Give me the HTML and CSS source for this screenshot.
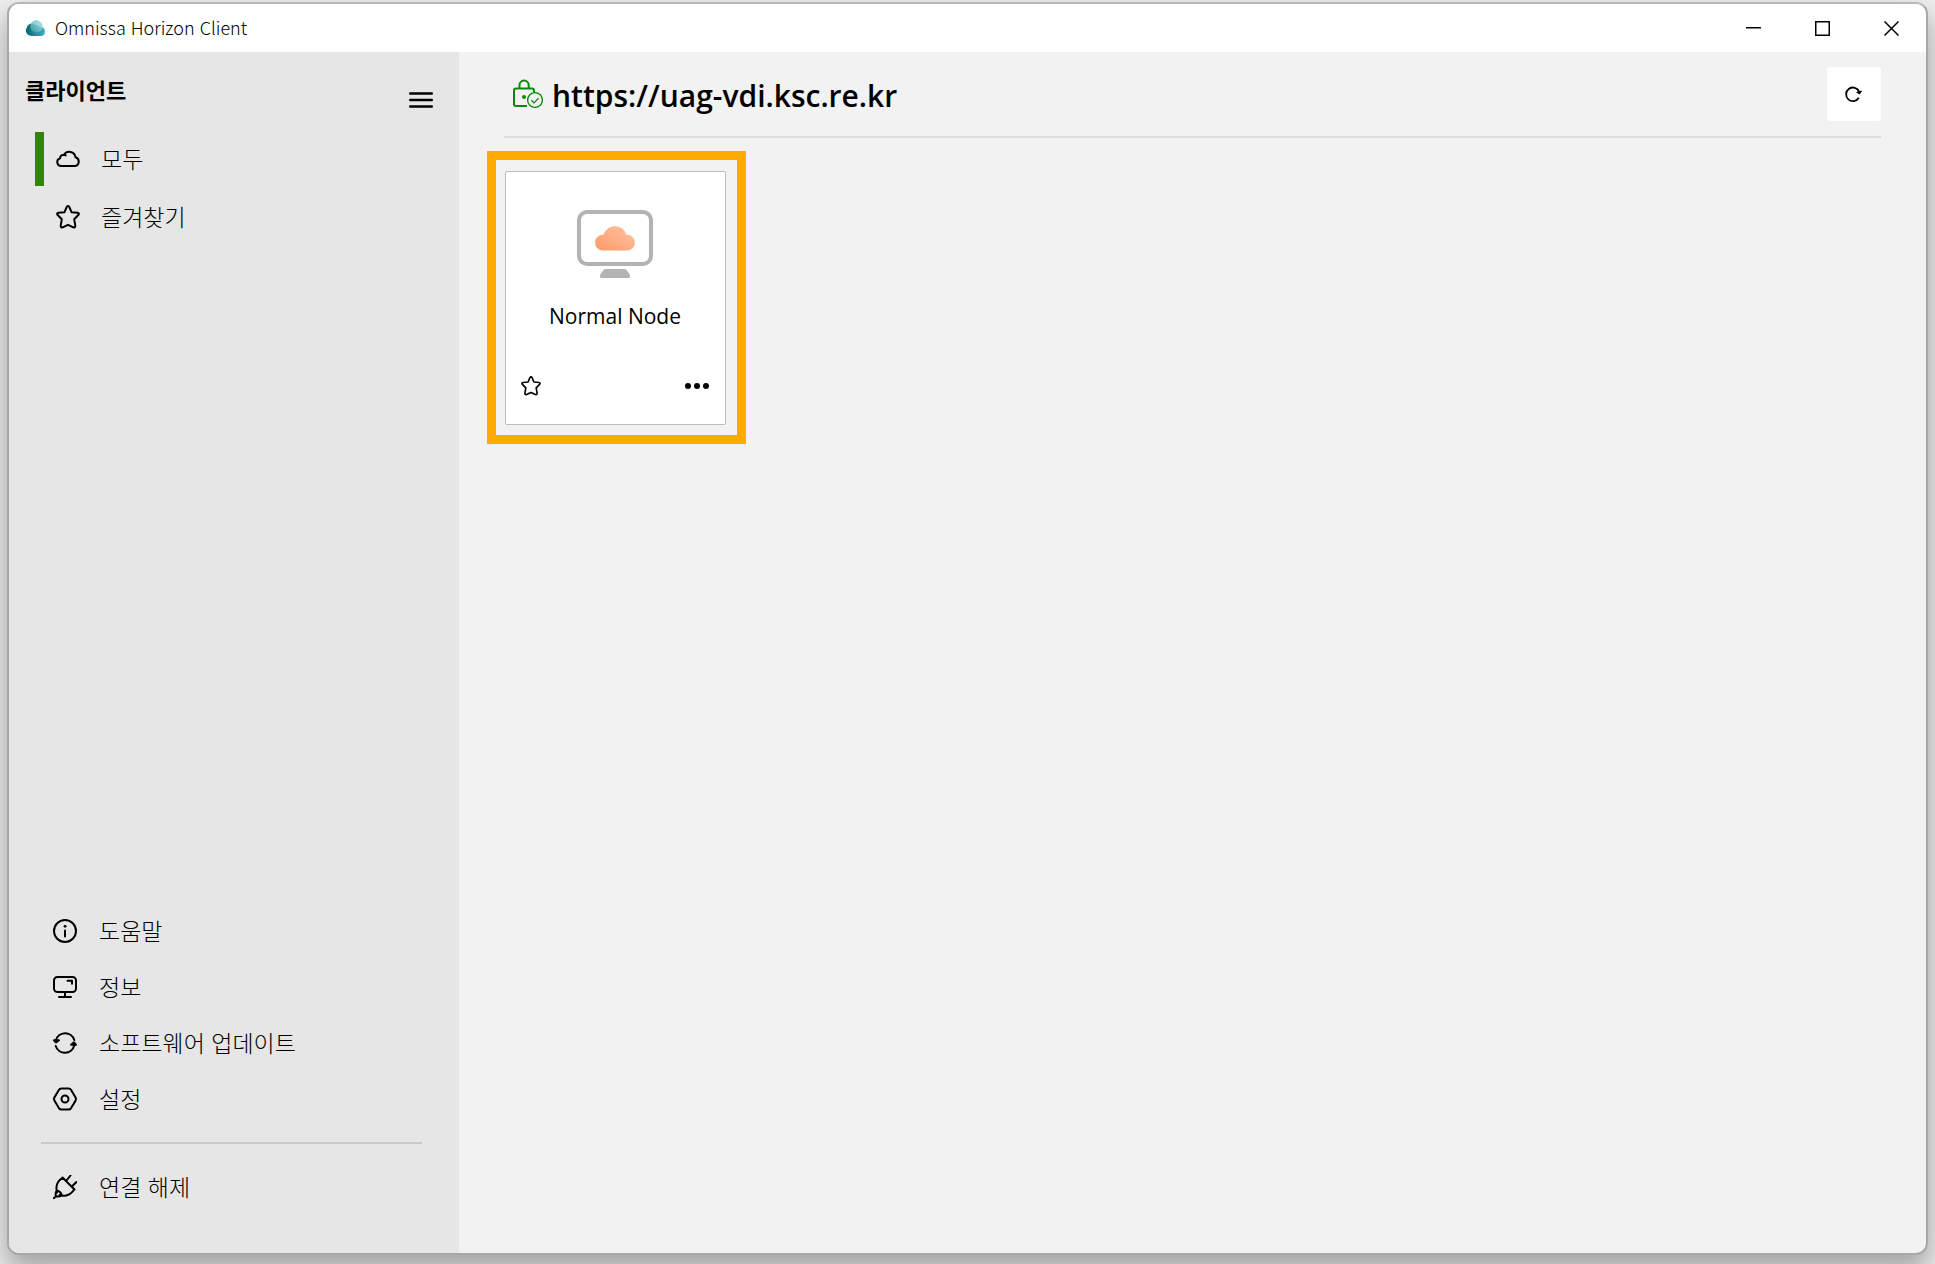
FILE: index.html
```html
<!DOCTYPE html>
<html lang="ko">
<head>
<meta charset="utf-8">
<meta name="viewport" content="width=device-width, initial-scale=1">
<title>Omnissa Horizon Client</title>
<link rel="stylesheet" href="styles.css">
</head>
<body>
<div class="window">
  <header class="titlebar">
    <svg class="app-logo" width="20" height="16" viewBox="0 0 20 16" aria-hidden="true">
      <defs>
        <linearGradient id="logo-base" x1="0" y1="0" x2="1" y2="0"><stop offset="0" stop-color="#0b6470"/><stop offset="1" stop-color="#3bb3c4"/></linearGradient>
        <linearGradient id="logo-top" x1="1" y1="0" x2="0" y2="1"><stop offset="0" stop-color="#b4e6ea"/><stop offset="1" stop-color="#3a9fab"/></linearGradient>
      </defs>
      <path d="M5.500 16A5.500 5.500 0 0 1 .8 7.500 5.500 5.500 0 0 1 5.500 3.500L15 7a4.600 4.600 0 0 1 .5 9z" fill="url(#logo-base)"/>
      <circle cx="10.500" cy="6.300" r="6.200" fill="url(#logo-top)" opacity=".85"/>
    </svg>
    <span class="app-title">Omnissa Horizon Client</span>
    <div class="window-controls">
      <button type="button" class="window-button" aria-label="최소화"><svg width="15" height="15" viewBox="0 0 15 15"><path d="M0 6.750h15" stroke="#000" stroke-width="1.500"/></svg></button>
      <button type="button" class="window-button" aria-label="최대화"><svg width="15" height="15" viewBox="0 0 15 15"><path d="M.75.75h13.500v13.500H.75z" fill="none" stroke="#000" stroke-width="1.500"/></svg></button>
      <button type="button" class="window-button" aria-label="닫기"><svg width="15" height="15" viewBox="0 0 15 15"><path d="M.5.5l14 14M14.500.5l-14 14" stroke="#000" stroke-width="1.500"/></svg></button>
    </div>
  </header>

  <div class="body">
    <aside class="sidebar">
      <div class="sidebar-head">
        <h2 class="sidebar-title">클라이언트</h2>
        <button type="button" class="menu-button" aria-label="메뉴"><svg width="24" height="18" viewBox="0 0 24 18"><path d="M1.200 2.500h21.600M1.200 9h21.600M1.200 15.500h21.600" stroke="#000" stroke-width="2.400" stroke-linecap="round"/></svg></button>
      </div>
      <nav class="nav">
        <a href="#all" class="nav-item nav-item-active">
          <svg class="icon" viewBox="0 0 24 24"><path d="M5.500 19h13a4.500 4.500 0 0 0 1-8.800 6.300 6.300 0 0 0-11.500-2.500 4 4 0 0 0-4 3.700A3.900 3.900 0 0 0 5.500 19zM8 7.700c.7.100 1.200.300 1.700.700"/></svg>
          <span class="item-label">모두</span>
        </a>
        <a href="#favorites" class="nav-item">
          <svg class="icon" viewBox="0 0 24 24"><path d="M10.700 2Q12 0 13.300 2L15.500 7.200 21.500 7.800Q23.800 8.300 22.300 10L18.200 14.300 19.300 20.500Q19.400 23 17.300 22.300L12 19.800 6.700 22.300Q4.600 23 4.700 20.500L5.800 14.300 1.700 10Q.2 8.300 2.500 7.800L8.500 7.200Z"/></svg>
          <span class="item-label">즐겨찾기</span>
        </a>
      </nav>
      <nav class="nav-bottom">
        <a href="#help" class="link-item">
          <svg class="icon" viewBox="0 0 24 24"><circle cx="12" cy="12" r="11"/><path d="M12 11.500v6"/><circle class="solid" cx="12" cy="7.300" r="1"/></svg>
          <span class="item-label">도움말</span>
        </a>
        <a href="#about" class="link-item">
          <svg class="icon" viewBox="0 0 24 24"><rect x="1" y="2" width="22" height="15" rx="3.500"/><path d="M12 17v4M6 22h12M14.500 5.800h4.500v3"/></svg>
          <span class="item-label">정보</span>
        </a>
        <a href="#update" class="link-item">
          <svg class="icon" viewBox="0 0 24 24"><path d="M2.800 9.500A9.600 9.600 0 0 1 21.300 9M21.200 14.500A9.600 9.600 0 0 1 2.700 15"/><path class="arrow" d="M1 9.300h5L3 11.500zM23 13.800h-5L21 11.300z"/></svg>
          <span class="item-label">소프트웨어 업데이트</span>
        </a>
        <a href="#settings" class="link-item">
          <svg class="icon" viewBox="0 0 24 24"><path d="M8.500 1.500h7q1.700 0 2.600 1.400l4.200 7q1.300 2.100 0 4.200l-4.200 7q-.9 1.400-2.600 1.400h-7q-1.700 0-2.600-1.400l-4.200-7q-1.300-2.100 0-4.200l4.200-7q.9-1.400 2.600-1.400z"/><circle cx="12" cy="12" r="3.500"/></svg>
          <span class="item-label">설정</span>
        </a>
        <hr class="nav-divider">
        <a href="#disconnect" class="link-item">
          <svg class="icon" viewBox="0 0 24 24"><path d="M9.500 2.500 21.500 14.500M9.500 2.800Q4 6 3.500 12 3.300 15 4 17.500M21.200 14.500Q18 19.500 13 20.500 9 21 6.500 20M13.500 5.500l4-5M18.800 11.500l4.700-4.500M.8 23.300 3 21.200M3.700 15.500Q2 18 3 21.200 6 22 8.800 20.300 8 16.500 3.700 15.500"/></svg>
          <span class="item-label">연결 해제</span>
        </a>
      </nav>
    </aside>

    <main class="main">
      <div class="server-bar">
        <svg class="lock" width="30" height="30" viewBox="0 0 30 30" fill="none" stroke="#088a08" aria-hidden="true">
          <path d="M14 27H3q-2 0-2-2V11.500q0-2 2-2h16q2 0 2 2V13" stroke-width="2"/>
          <path d="M6.500 9.500V6.200a4.600 4.600 0 0 1 9.200 0v3.300" stroke-width="2"/>
          <circle cx="11" cy="18" r="2" fill="#088a08" stroke="none"/>
          <circle cx="22" cy="21" r="7.400" stroke-width="1.300"/>
          <path d="M18.300 21.300l2.700 2.600 4.700-4.800" stroke-width="1.300"/>
        </svg>
        <h1 class="server-name">https://uag-vdi.ksc.re.kr</h1>
        <button type="button" class="refresh" aria-label="새로 고침"><svg width="18" height="18" viewBox="0 0 18 18"><path d="M13.800 12.800A6.800 6.800 0 1 1 14.200 6.700" fill="none" stroke="#000" stroke-width="1.800"/><path d="M11.700 7.300l4.800-1.200-1.900 2.800z" stroke="#000" stroke-linejoin="round"/></svg></button>
      </div>
      <section class="items">
        <div class="highlight">
          <article class="card">
            <svg class="desktop-icon" width="76" height="68" viewBox="0 0 76 68" aria-hidden="true">
              <defs><linearGradient id="cloud" x1="0" y1="1" x2="1" y2="0"><stop offset="0" stop-color="#ff9868"/><stop offset="1" stop-color="#ffc5a2"/></linearGradient></defs>
              <rect x="2" y="2" width="72" height="52" rx="8" fill="none" stroke="#b3b3b3" stroke-width="4"/>
              <path d="M29 59h18q1.500 0 2.500 1l3 4q1 2 0 4H23.500q-1-2 0-4l3-4q1-1 2.500-1z" fill="#b3b3b3"/>
              <path d="M26 40.500a7.900 7.900 0 0 1 0-15.800h.5a12 12 0 0 1 23 0h.5a7.900 7.900 0 0 1 0 15.800z" fill="url(#cloud)"/>
            </svg>
            <h3 class="card-name">Normal Node</h3>
            <div class="card-actions">
              <button type="button" class="card-button" aria-label="즐겨찾기에 추가"><svg class="icon icon-small" viewBox="0 0 24 24"><path d="M10.700 2Q12 0 13.300 2L15.500 7.200 21.500 7.800Q23.800 8.300 22.300 10L18.200 14.300 19.300 20.500Q19.400 23 17.300 22.300L12 19.800 6.700 22.300Q4.600 23 4.700 20.500L5.800 14.300 1.700 10Q.2 8.300 2.500 7.800L8.500 7.200Z"/></svg></button>
              <button type="button" class="card-button" aria-label="더 보기"><svg width="24" height="6" viewBox="0 0 24 6"><circle cx="3" cy="3" r="3"/><circle cx="12" cy="3" r="3"/><circle cx="21" cy="3" r="3"/></svg></button>
            </div>
          </article>
        </div>
      </section>
    </main>
  </div>
</div>
</body>
</html>
```
FILE: styles.css
```css
* {
  box-sizing: border-box;
}

body {
  margin: 0;
  min-height: 100vh;
  display: flex;
  padding: 2px 7px 9px;
  overflow: hidden;
  background: #f0f0f0;
  color: #000;
  font-family: "Open Sans", "Noto Sans CJK KR", sans-serif;
}

h1, h2, h3 {
  margin: 0;
}

button {
  display: flex;
  align-items: center;
  justify-content: center;
  padding: 0;
  border: 0;
  background: none;
  cursor: pointer;
}

a {
  color: inherit;
  text-decoration: none;
}

.window {
  flex: 1;
  display: flex;
  flex-direction: column;
  overflow: hidden;
  border: 2px solid #a8a8a8;
  border-top-color: #b8b8b8;
  border-radius: 12px;
  background: #f2f2f2;
  box-shadow: 0 14px 28px 2px rgba(0, 0, 0, 0.32);
}

.titlebar {
  display: flex;
  align-items: center;
  height: 48px;
  padding-left: 17px;
  background: #fff;
}

.app-title {
  margin-left: 9px;
  padding-bottom: 2px;
  font-family: "Noto Sans CJK KR", sans-serif;
  font-size: 18px;
  font-weight: 300;
}

.window-controls {
  display: flex;
  height: 100%;
  margin-left: auto;
}

.window-button {
  width: 69px;
}

.body {
  flex: 1;
  display: flex;
}

.sidebar {
  flex: 0 0 450px;
  display: flex;
  flex-direction: column;
  padding-bottom: 38px;
  background: #e6e6e6;
  font-family: "Noto Sans CJK KR", sans-serif;
}

.sidebar-head {
  display: flex;
  justify-content: space-between;
  height: 80px;
  padding: 20px 26px 0 16px;
}

.sidebar-title {
  font-size: 22px;
  line-height: 34px;
}

.menu-button {
  height: 56px;
}

.nav {
  display: flex;
  flex-direction: column;
  gap: 4px;
  padding-left: 26px;
}

.nav-item,
.link-item {
  display: flex;
  align-items: center;
  font-size: 23px;
  font-weight: 300;
}

.item-label {
  padding-bottom: 2px;
}

.nav-item {
  height: 54px;
  gap: 21px;
  padding-left: 12px;
  border-left: 9px solid transparent;
}

.nav-item-active {
  border-left-color: #328600;
}

.nav-bottom {
  display: flex;
  flex-direction: column;
  margin-top: auto;
}

.link-item {
  height: 56px;
  gap: 22px;
  padding-left: 44px;
}

.nav-divider {
  width: 381px;
  height: 2px;
  margin: 15px 32px;
  border: 0;
  background: #c9c9c9;
}

.icon {
  flex: none;
  width: 24px;
  height: 24px;
  fill: none;
  stroke: #000;
  stroke-width: 2;
  stroke-linecap: round;
  stroke-linejoin: round;
}

.icon-small {
  width: 20px;
  height: 20px;
}

.icon .solid {
  fill: #000;
  stroke-width: 1;
}

.icon .arrow {
  fill: #000;
}

.main {
  flex: 1;
  min-width: 0;
}

.server-bar {
  display: flex;
  align-items: center;
  margin: 0 45px;
  padding: 15px 0;
  border-bottom: 2px solid #dcdcdc;
}

.lock {
  margin-left: 9px;
}

.server-name {
  margin-left: 9px;
  padding-top: 3px;
  font-size: 30px;
  font-weight: 600;
  line-height: 40px;
}

.refresh {
  width: 54px;
  height: 54px;
  margin-left: auto;
  border-radius: 3px;
  background: #fff;
}

.items {
  display: flex;
  padding: 13px 28px;
}

.highlight {
  padding: 11px 11px 10px 9px;
  border: 9px solid #ffaa00;
}

.card {
  display: flex;
  flex-direction: column;
  align-items: center;
  width: 221px;
  height: 254px;
  padding: 38px 16px 28px 15px;
  border: 1px solid #bdbdbd;
  border-radius: 2px;
  background: #fff;
}

.card-name {
  margin-top: 22px;
  font-size: 21px;
  font-weight: 400;
  line-height: 32px;
}

.card-actions {
  display: flex;
  align-items: center;
  justify-content: space-between;
  width: 100%;
  margin-top: auto;
}
```
